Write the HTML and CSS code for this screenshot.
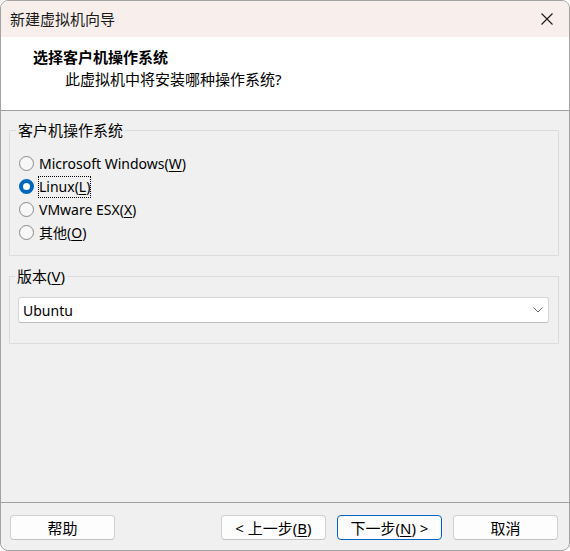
FILE: index.html
```html
<!DOCTYPE html>
<html lang="zh-CN">
<head>
<meta charset="utf-8">
<title>新建虚拟机向导</title>
<link rel="stylesheet" href="styles.css">
</head>
<body>
<div class="window">
  <div class="titlebar">
    <span class="title">新建虚拟机向导</span>
    <svg class="close" width="12" height="12" viewBox="0 0 12 12"><path d="M0.5 0.5 L11.5 11.5 M11.5 0.5 L0.5 11.5" stroke="#1a1a1a" stroke-width="1.1" fill="none"/></svg>
  </div>
  <div class="header">
    <div class="heading">选择客户机操作系统</div>
    <div class="subheading">此虚拟机中将安装哪种操作系统?</div>
  </div>
  <div class="content">
    <fieldset class="group os-group">
      <legend>客户机操作系统</legend>
      <div class="radio-row"><span class="radio"></span><span class="label">Microsoft Windows(<u>W</u>)</span></div>
      <div class="radio-row"><span class="radio checked"></span><span class="label focus">Linux(<u>L</u>)</span></div>
      <div class="radio-row"><span class="radio"></span><span class="label">VMware ESX(<u>X</u>)</span></div>
      <div class="radio-row"><span class="radio"></span><span class="label">其他(<u>O</u>)</span></div>
    </fieldset>
    <fieldset class="group ver-group">
      <legend>版本(<u>V</u>)</legend>
      <div class="select">
        <span class="select-text">Ubuntu</span>
        <svg class="chev" width="10" height="6" viewBox="0 0 10 6"><path d="M0.5 0.5 L5 5 L9.5 0.5" stroke="#6a6a6a" stroke-width="1" fill="none"/></svg>
      </div>
    </fieldset>
  </div>
  <div class="footer">
    <button class="btn">帮助</button>
    <div class="spacer"></div>
    <button class="btn">&lt; 上一步(<u>B</u>)</button>
    <button class="btn default">下一步(<u>N</u>) &gt;</button>
    <button class="btn">取消</button>
  </div>
</div>
</body>
</html>
```

FILE: styles.css
```css
* { box-sizing: border-box; }
html, body {
  margin: 0;
  padding: 0;
  background: #ffffff;
}
body {
  font-family: "Noto Sans", "Noto Sans CJK SC", sans-serif;
  font-size: 15px;
  color: #000;
}
.window {
  width: 570px;
  height: 551px;
  border: 1px solid #a3a3a3;
  border-radius: 8px;
  overflow: hidden;
  display: flex;
  flex-direction: column;
  background: #f0f0f0;
}
.titlebar {
  height: 36px;
  flex: none;
  background: #f8efec;
  display: flex;
  align-items: center;
  justify-content: space-between;
  padding: 0 16px 0 9px;
}
.title {
  font-size: 15px;
  line-height: 20px;
  color: #1a1a1a;
}
.close { display: block; }
.header {
  height: 74px;
  flex: none;
  background: #ffffff;
  border-bottom: 1px solid #a0a0a0;
  padding-top: 9px;
}
.heading {
  font-weight: bold;
  line-height: 22px;
  padding-left: 32px;
}
.subheading {
  line-height: 22px;
  padding-left: 64px;
}
.content {
  flex: 1;
  padding: 9px 10px 0 8px;
}
.group {
  margin: 0;
  border: 1px solid #dcdcdc;
  min-width: 0;
}
.group legend {
  line-height: 20px;
  padding: 0 2px;
  margin-left: -3px;
}
.os-group {
  padding: 12px 9px 11px 9px;
}
.radio-row {
  height: 23px;
  display: flex;
  align-items: center;
  gap: 5px;
}
.radio {
  width: 15px;
  height: 15px;
  border-radius: 50%;
  border: 1px solid #8a8a8a;
  background: #f7f7f7;
  flex: none;
}
.radio.checked {
  border: 4.5px solid #0067c0;
  background: #ffffff;
}
.label {
  font-size: 14px;
  line-height: 20px;
}
.label.focus {
  outline: 1px dotted #000;
  outline-offset: 0px;
}
.ver-group {
  margin-top: 10px;
  padding: 11px 9px 20px 8px;
}
.select {
  height: 26px;
  background: #ffffff;
  border: 1px solid #d6d6d6;
  border-bottom-color: #bdbdbd;
  border-radius: 3px;
  display: flex;
  align-items: center;
  justify-content: space-between;
  padding: 0 5px 0 4px;
}
.select-text {
  font-size: 14px;
}
.chev { display: block; }
.footer {
  height: 48px;
  flex: none;
  border-top: 1px solid #a0a0a0;
  display: flex;
  align-items: flex-start;
  padding: 12px 11px 0 9px;
  gap: 11px;
}
.spacer { flex: 1; }
.btn {
  width: 105px;
  height: 25px;
  font: inherit;
  font-size: 15px;
  line-height: 20px;
  background: #fdfdfd;
  border: 1px solid #d0d0d0;
  border-bottom-color: #c2c2c2;
  border-radius: 4px;
  padding: 0;
  color: #000;
}
.btn.default {
  border: 1px solid #0067c0;
}
u { text-underline-offset: 2px; }
```
